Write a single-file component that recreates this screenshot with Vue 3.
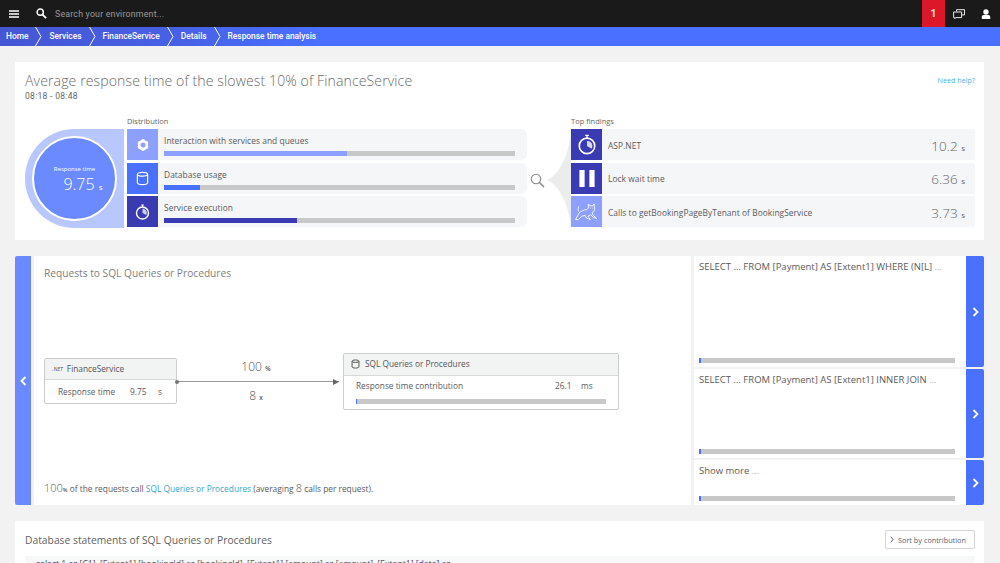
<script setup>
const crumbs = ['Home', 'Services', 'FinanceService', 'Details', 'Response time analysis']
const distribution = [
  { label: 'Interaction with services and queues', tone: 'light', icon: 'gear', pct: 52.2 },
  { label: 'Database usage', tone: 'mid', icon: 'db', pct: 10.2 },
  { label: 'Service execution', tone: 'dark', icon: 'watch', pct: 37.9 }
]
const findings = [
  { label: 'ASP.NET', tone: 'dark', icon: 'watch', value: '10.2' },
  { label: 'Lock wait time', tone: 'dark', icon: 'pause', value: '6.36' },
  { label: 'Calls to getBookingPageByTenant of BookingService', tone: 'light', icon: 'cat', value: '3.73' }
]
const statements = [
  { text: 'SELECT ... FROM [Payment] AS [Extent1] WHERE (N[L] ', cls: 'tall' },
  { text: 'SELECT ... FROM [Payment] AS [Extent1] INNER JOIN ', cls: 'middle' },
  { text: 'Show more ', cls: 'short' }
]
</script>

<template>
  <div class="page">
    <header class="topbar">
      <svg class="menu" viewBox="0 0 10 8" width="10" height="8"><path d="M0 1h10M0 4h10M0 7h10" stroke="#fff" stroke-width="1.5" /></svg>
      <svg class="search" viewBox="0 0 12 12" width="11" height="11"><circle cx="4.6" cy="4.6" r="3.4" fill="none" stroke="#fff" stroke-width="1.6" /><path d="M7.2 7.2L11 11" stroke="#fff" stroke-width="2" /></svg>
      <span class="search-text">Search your environment...</span>
      <span class="alert">1</span>
      <span class="top-icon">
        <svg viewBox="0 0 12 10" width="12" height="10"><path d="M3.5 2.5V.7h8v5.2H9M.6 3h8v5.6H3L1.6 9.6V8.6h-1z" fill="none" stroke="#e8e8e8" stroke-width="1" /></svg>
      </span>
      <span class="top-icon">
        <svg viewBox="0 0 10 10" width="10" height="10"><circle cx="5" cy="3" r="2.7" fill="#fff" /><path d="M.8 10V7.6Q.8 6 2.6 6h4.8q1.8 0 1.8 1.6V10z" fill="#fff" /></svg>
      </span>
    </header>

    <nav class="crumbs">
      <span v-for="(c, i) in crumbs" :key="c" class="crumb">
        <span>{{ c }}</span>
        <svg v-if="i < crumbs.length - 1" class="chev" viewBox="0 0 7 19" width="7" height="19"><path d="M.5 0L6 9.5.5 19" fill="none" stroke="#fff" stroke-width="1" /></svg>
      </span>
    </nav>

    <main class="content">
      <section class="card summary">
        <div class="summary-head">
          <h1>Average response time of the slowest 10% of FinanceService</h1>
          <a class="help">Need help?</a>
        </div>
        <div class="timeframe">08:18 - 08:48</div>

        <div class="analysis">
          <div class="hero">
            <div class="hero-circle">
              <span class="hero-label">Response time</span>
              <span class="hero-value">9.75 <small>s</small></span>
            </div>
          </div>

          <div class="column dist">
            <div class="col-label">Distribution</div>
            <div v-for="d in distribution" :key="d.label" class="row">
              <span class="tile" :class="d.tone">
                <svg v-if="d.icon === 'gear'" viewBox="0 0 16 16" width="14" height="14"><circle cx="8" cy="8" r="4.400" fill="none" stroke="#fff" stroke-width="3" /><path d="M8 1.500v2M8 12.500v2M2.400 4.800l1.700 1M11.900 10.200l1.700 1M13.600 4.800l-1.700 1M4.100 10.200l-1.700 1" stroke="#fff" stroke-width="3.200" /></svg>
                <svg v-else-if="d.icon === 'db'" viewBox="0 0 14 16" width="13" height="15"><path d="M1.500 3.500v9c0 1.200 2.400 2 5.500 2s5.500-.8 5.500-2v-9" fill="none" stroke="#fff" stroke-width="1.300" /><ellipse cx="7" cy="3.500" rx="5.500" ry="2" fill="none" stroke="#fff" stroke-width="1.300" /></svg>
                <svg v-else viewBox="0 0 16 17" width="15" height="16"><circle cx="8" cy="9.500" r="6.400" fill="none" stroke="#fff" stroke-width="1.500" /><path d="M8 9.500V4.800A4.700 4.700 0 0 1 12 11.800z" fill="#fff" opacity=".75" /><path d="M6.500 1h3M8 1v2" stroke="#fff" stroke-width="1.200" /></svg>
              </span>
              <div class="row-body">
                <div class="row-text">{{ d.label }}</div>
                <div class="bar"><i :class="d.tone" :style="{ width: d.pct + '%' }"></i></div>
              </div>
            </div>
          </div>

          <div class="connector">
            <svg class="lens" viewBox="0 0 15 15" width="15" height="15"><circle cx="6" cy="6" r="4.700" fill="none" stroke="#8a8a8a" stroke-width="1.100" /><path d="M9.500 9.500L14 14" stroke="#8a8a8a" stroke-width="1.500" /></svg>
            <svg class="funnel" viewBox="0 0 24 100" width="24" height="100"><path d="M0 51C10 47 22 30 24 0V100C22 72 10 55 0 51z" fill="#ebecec" /></svg>
          </div>

          <div class="column find">
            <div class="col-label">Top findings</div>
            <div v-for="f in findings" :key="f.label" class="row">
              <span class="tile" :class="f.tone">
                <svg v-if="f.icon === 'watch'" viewBox="0 0 22 24" width="20" height="22"><circle cx="11" cy="13" r="8.500" fill="none" stroke="#fff" stroke-width="1.800" /><path d="M11 13V7.500A5.500 5.500 0 0 1 16 16z" fill="#fff" opacity=".8" /><path d="M9 1.500h4M11 1.500v3" stroke="#fff" stroke-width="1.400" /></svg>
                <svg v-else-if="f.icon === 'pause'" viewBox="0 0 18 20" width="18" height="19"><path d="M1 1h5.500v18H1zM11.500 1H17v18h-5.500z" fill="#fff" /></svg>
                <svg v-else viewBox="0 0 24 20" width="23" height="19"><path d="M14 2l1.500 2h3L20 2l.5 5c.3 2-1 3.500-2.500 4l1 3 4 3.500-3.500-1-3-3-3 1.500 2.500 3.500-4-1.500-1.500-3-3.500 1-3.500 3.500H.5L4 12c2-2 5-4 8-4l2-1.500z" fill="none" stroke="#fff" stroke-width=".9" stroke-linejoin="round" /><path d="M4 4.500C2.500 7 3 9.500 5 11.500M15.500 6.500h.8M18 6.500h.8" fill="none" stroke="#fff" stroke-width=".8" /></svg>
              </span>
              <div class="row-text find-text">{{ f.label }}</div>
              <div class="find-val">{{ f.value }} <small>s</small></div>
            </div>
          </div>
        </div>
      </section>

      <section class="requests">
        <button class="side-btn back">
          <svg viewBox="0 0 7 10" width="7" height="10"><path d="M5.500 1L1.500 5l4 4" fill="none" stroke="#fff" stroke-width="1.800" /></svg>
        </button>

        <div class="flow">
          <h2>Requests to SQL Queries or Procedures</h2>
          <div class="canvas">
            <div class="node node-a">
              <div class="node-head"><span class="net">.NET</span>FinanceService</div>
              <div class="node-line">
                <span class="nl-label">Response time</span>
                <span class="nl-val">9.75</span>
                <span>s</span>
              </div>
            </div>

            <div class="link">
              <div class="link-top">100 <small>%</small></div>
              <div class="link-line"><i class="dot"></i><i class="arrow"></i></div>
              <div class="link-bottom">8 <small>x</small></div>
            </div>

            <div class="node node-b">
              <div class="node-head">
                <svg viewBox="0 0 14 16" width="9" height="10"><path d="M1.500 3.500v9c0 1.200 2.400 2 5.500 2s5.500-.8 5.500-2v-9" fill="none" stroke="#555" stroke-width="1.600" /><ellipse cx="7" cy="3.500" rx="5.500" ry="2" fill="none" stroke="#555" stroke-width="1.600" /></svg>
                SQL Queries or Procedures
              </div>
              <div class="node-line b-line">
                <span class="nl-label">Response time contribution</span>
                <span class="nl-val">26.1</span>
                <span>ms</span>
              </div>
              <div class="bar b-bar"><i class="mid" style="width: 0.4%"></i></div>
            </div>
          </div>
          <p class="flow-foot"><span class="big">100</span><small>%</small> of the requests call <a>SQL Queries or Procedures</a> (averaging <span class="big">8</span> calls per request).</p>
        </div>

        <div class="statements">
          <div v-for="s in statements" :key="s.text" class="stmt" :class="s.cls">
            <div class="stmt-body">
              <div class="stmt-text">{{ s.text }}<span class="dots">...</span></div>
              <div class="bar stmt-bar"><i class="mid" style="width: 0.8%"></i></div>
            </div>
            <button class="side-btn next">
              <svg viewBox="0 0 7 10" width="7" height="10"><path d="M1.500 1l4 4-4 4" fill="none" stroke="#fff" stroke-width="1.800" /></svg>
            </button>
          </div>
        </div>
      </section>

      <section class="card db">
        <div class="db-head">
          <h2>Database statements of SQL Queries or Procedures</h2>
          <button class="sort">
            <svg viewBox="0 0 5 8" width="4" height="7"><path d="M1 .5L4 4 1 7.500" fill="none" stroke="#2b3d9e" stroke-width="1" /></svg>
            Sort by contribution
          </button>
        </div>
        <div class="code"><b>select</b> 1 <b>as</b> [C1], [Extent1].[bookingId] <b>as</b> [bookingId], [Extent1].[amount] <b>as</b> [amount], [Extent1].<b>[date]</b> <b>as</b></div>
      </section>
    </main>
  </div>
</template>

<style scoped>
.page {
  width: 1000px;
  height: 563px;
  overflow: hidden;
  background: #f2f2f2;
  font-family: "Open Sans", "Noto Sans", sans-serif;
  color: #555;
}
.topbar {
  height: 27px;
  background: #1a1a1a;
  display: flex;
  align-items: center;
}
.menu { margin-left: 9px; }
.search { margin-left: 17px; }
.search-text {
  margin-left: 8px;
  font: 8.800px Roboto, sans-serif;
  color: #9a9a9a;
  letter-spacing: .2px;
  flex: 1;
}
.alert {
  width: 23px;
  height: 27px;
  background: #dc172a;
  color: #f0d8d0;
  font: 700 11px/27px Roboto, sans-serif;
  text-align: center;
}
.top-icon {
  width: 27.500px;
  display: flex;
  justify-content: center;
}
.crumbs {
  height: 19px;
  background: linear-gradient(90deg, #4556d4 0, #4761e6 18%, #4a70ff 32%, #4a70ff 100%);
  display: flex;
  color: #fff;
  font: 500 8.400px/19px Roboto, sans-serif;
  padding-left: 6px;
}
.crumb {
  display: flex;
  align-items: center;
}
.chev { margin: 0 7px; }
.content {
  display: flex;
  flex-direction: column;
  padding: 16px 16px 0 15px;
  gap: 16px;
}
.card { background: #fff; box-sizing: border-box; }
.summary {
  height: 178px;
  padding: 9px 9px 0 10px;
}
.summary-head {
  display: flex;
  justify-content: space-between;
  align-items: flex-start;
}
h1 {
  margin: 0;
  font-size: 14.100px;
  line-height: 20px;
  font-weight: 300;
  color: #6a6a6a;
  letter-spacing: .1px;
}
.help {
  font-size: 7.200px;
  line-height: 20px;
  color: #45b5d8;
  margin-top: -1px;
}
.timeframe {
  font: 8.500px/11px Roboto, sans-serif;
  color: #666;
  letter-spacing: .3px;
}
.analysis {
  display: flex;
  margin-top: 14px;
}
.hero {
  width: 99px;
  height: 99px;
  margin-top: 13px;
  margin-right: 3px;
  background: #b9c7ff;
  border-radius: 50px 0 0 50px;
  display: flex;
  align-items: center;
  padding-left: 7px;
  box-sizing: border-box;
}
.hero-circle {
  width: 85px;
  height: 85px;
  box-sizing: border-box;
  border: 2.500px solid #fff;
  border-radius: 50%;
  background: #6b8aff;
  color: #fff;
  display: flex;
  flex-direction: column;
  align-items: center;
  justify-content: center;
  padding-top: 5px;
}
.hero-label { font-size: 6px; line-height: 9px; font-weight: 500; }
.hero-value { font-size: 16px; line-height: 21px; font-weight: 300; margin-left: 17px; }
.hero-value small { font-size: 8px; font-weight: 400; }
.column { display: flex; flex-direction: column; gap: 2.500px; }
.dist { width: 400px; }
.find { width: 404px; }
.col-label {
  font-size: 7.500px;
  line-height: 10px;
  height: 10.500px;
  color: #666;
}
.row {
  height: 31px;
  display: flex;
  background: #f5f6f7;
  border-radius: 0 6px 6px 0;
  align-items: stretch;
}
.find .row { border-radius: 0 2px 2px 0; }
.tile {
  width: 31px;
  flex: none;
  display: flex;
  align-items: center;
  justify-content: center;
}
.tile.light, i.light { background: #8ea0ff; }
.tile.mid, i.mid { background: #4a70ff; }
.tile.dark, i.dark { background: #3a3ab2; }
.row-body {
  flex: 1;
  padding: 5px 12px 0 6px;
}
.row-text {
  font-size: 8.400px;
  line-height: 14px;
  color: #5a5a5a;
  letter-spacing: .05px;
}
.bar {
  height: 5px;
  background: #c8c8c8;
  display: flex;
}
.bar i { display: block; height: 100%; }
.row-body .bar { margin-top: 3px; }
.connector {
  width: 44px;
  display: flex;
  align-items: center;
  margin-top: 13px;
  height: 99px;
  box-sizing: border-box;
  padding-left: 3px;
}
.lens { flex: none; margin-top: 3px; }
.funnel { flex: none; margin-left: 2px; margin-right: -1px; }
.find-text {
  flex: 1;
  align-self: center;
  padding: 2px 0 0 6px;
}
.find-val {
  align-self: center;
  font-size: 13.500px;
  font-weight: 300;
  color: #666;
  padding: 2px 10px 0 0;
}
.find-val small { font-size: 8px; font-weight: 400; }
.requests {
  height: 249px;
  display: flex;
}
.side-btn {
  border: 0;
  padding: 0;
  margin: 0;
  display: flex;
  align-items: center;
  justify-content: center;
}
.back {
  width: 16px;
  background: #6b8aff;
  margin-right: 3px;
  border-radius: 2px 0 0 2px;
}
.next {
  width: 18px;
  flex: none;
  background: #4a70ff;
  border-radius: 0 2px 2px 0;
}
.flow {
  width: 657px;
  background: #fff;
  padding: 10px 0 0 10px;
  box-sizing: border-box;
  display: flex;
  flex-direction: column;
  margin-right: 3px;
}
.flow h2 {
  margin: 0;
  font-size: 10.200px;
  line-height: 14px;
  font-weight: 400;
  color: #7f7f7f;
}
.canvas {
  height: 118px;
  margin-top: 73px;
  display: flex;
  align-items: flex-start;
}
.node {
  border: 1px solid #ccc;
  border-radius: 2px;
  box-sizing: border-box;
  background: #fff;
  font-size: 8.300px;
}
.node-a {
  width: 133px;
  height: 46px;
  margin-top: 5px;
}
.node-b {
  width: 276px;
  height: 57px;
}
.node-head {
  background: #f2f4f4;
  border-bottom: 1px solid #d8d8d8;
  height: 20px;
  line-height: 20px;
  padding-left: 7px;
  display: flex;
  align-items: center;
  gap: 4px;
  color: #555;
}
.node-b .node-head { height: 22px; gap: 5px; padding-bottom: 1px; box-sizing: border-box; }
.net { font-size: 5.500px; font-style: italic; }
.node-line {
  display: flex;
  padding: 5px 0 0 13px;
  line-height: 14px;
  color: #5a5a5a;
}
.nl-label { width: 72px; }
.nl-val { width: 28px; }
.b-line { padding-top: 3px; padding-left: 12px; }
.b-line .nl-label { width: 199px; }
.b-line .nl-val { width: 26px; }
.b-bar { height: 5px; margin: 6px 12px 0 12px; }
.link {
  width: 166px;
  text-align: center;
  color: #555;
  font-size: 12px;
  font-weight: 300;
}
.link small { font-size: 6.500px; font-weight: 600; }
.link-top { height: 28px; line-height: 28px; padding-right: 8px; }
.link-line {
  height: 1px;
  background: #999;
  width: 162px;
  position: relative;
}
.dot {
  position: absolute;
  left: -2px;
  top: -1.500px;
  width: 4px;
  height: 4px;
  border-radius: 50%;
  background: #777;
}
.arrow {
  position: absolute;
  right: 0;
  top: -2.500px;
  border-left: 6px solid #666;
  border-top: 3px solid transparent;
  border-bottom: 3px solid transparent;
}
.link-bottom { height: 28px; line-height: 28px; padding-right: 8px; }
.flow-foot {
  margin: 10px 0 0;
  font-size: 8.350px;
  line-height: 14px;
  color: #5a5a5a;
}
.flow-foot a { color: #3aa6c9; }
.flow-foot .big { font-size: 11px; font-weight: 300; }
.flow-foot small { font-size: 5.500px; font-weight: 600; }
.statements {
  width: 290px;
  display: flex;
  flex-direction: column;
  gap: 2px;
}
.stmt { display: flex; }
.tall { height: 111px; }
.middle { height: 89px; }
.short { height: 45px; }
.stmt-body {
  flex: 1;
  background: #fff;
  padding: 4px 11px 4px 5px;
  display: flex;
  flex-direction: column;
  justify-content: space-between;
}
.stmt-text {
  font-size: 9.500px;
  line-height: 13px;
  color: #5a5a5a;
  white-space: nowrap;
}
.dots { color: #aaa; }
.stmt-bar { flex: none; }
.db {
  height: 60px;
  padding: 9px 9px 0 10px;
}
.db-head {
  display: flex;
  justify-content: space-between;
  align-items: center;
  height: 19px;
}
.db-head h2 {
  margin: 0;
  font-size: 10.300px;
  font-weight: 400;
  color: #5f5f5f;
}
.sort {
  width: 90px;
  height: 19px;
  box-sizing: border-box;
  background: #fff;
  border: 1px solid #d5d5d5;
  border-radius: 2px;
  font: 7.300px "Open Sans", sans-serif;
  color: #5c6270;
  padding: 0 0 0 4px;
  display: flex;
  align-items: center;
  gap: 4px;
  white-space: nowrap;
}
.code {
  margin-top: 7px;
  background: #f7f8f8;
  height: 30px;
  padding: 3px 0 0 11px;
  font-size: 8.600px;
  line-height: 10px;
  color: #555;
  white-space: nowrap;
}
.code b { color: #2b3d9e; font-weight: 400; }
</style>

<style>
html, body { margin: 0; background: #f2f2f2; }
</style>
